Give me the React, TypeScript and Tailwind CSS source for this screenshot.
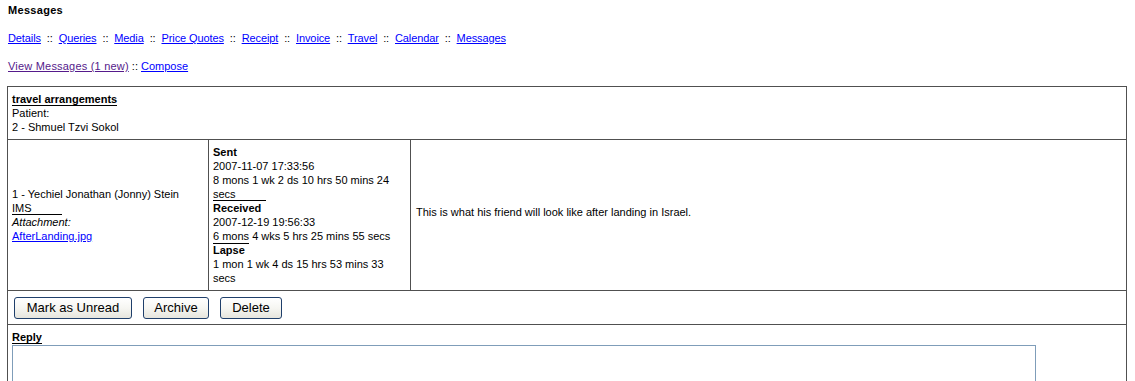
const navLinks = ["Details", "Queries", "Media", "Price Quotes", "Receipt", "Invoice", "Travel", "Calendar", "Messages"];

const buttons = [
  { label: "Mark as Unread", w: "w-[118px]" },
  { label: "Archive", w: "w-[66px]" },
  { label: "Delete", w: "w-[62px]" },
];

export default function App() {
  return (
    <div className="font-['Liberation_Sans',Arial,sans-serif] text-[11px] leading-[14px] text-black bg-white min-h-[381px]">
      <div className="px-2 pt-[3px]">
        <div className="font-bold tracking-[0.3px]">Messages</div>

        <div className="mt-[14px] whitespace-pre tracking-[-0.1px]">
          {navLinks.map((l, i) => (
            <span key={l}>
              <a href="#" className="text-[#0000ff] underline">{l}</a>
              {i < navLinks.length - 1 && "  ::  "}
            </span>
          ))}
        </div>

        <div className="mt-[14px] whitespace-pre">
          <a href="#" className="text-[#551a8b] underline tracking-[0.2px]">View Messages (1 new)</a>
          {" :: "}
          <a href="#" className="text-[#0000ff] underline">Compose</a>
        </div>
      </div>

      <div className="ml-[7px] mt-[13px] w-[1120px] border border-[#505050]">
        {/* subject */}
        <div className="px-1 pt-[5px] pb-[5px] border-b border-[#505050]">
          <span className="inline-block h-[14px] border-b border-black font-bold">travel arrangements</span>
          <div>Patient:</div>
          <div>2 - Shmuel Tzvi Sokol</div>
        </div>

        {/* message row */}
        <div className="flex border-b border-[#505050]">
          <div className="w-[200px] pl-1 pr-1 flex flex-col justify-center">
            <div>1 - Yechiel Jonathan (Jonny) Stein</div>
            <div className="w-[50px] h-[14px] border-b border-black">IMS</div>
            <div className="italic">Attachment:</div>
            <div>
              <a href="#" className="text-[#0000ff] underline">AfterLanding.jpg</a>
            </div>
          </div>
          <div className="w-[202px] border-l border-[#505050] pl-1 pr-1 py-[5px]">
            <div className="font-bold">Sent</div>
            <div>2007-11-07 17:33:56</div>
            <div>8 mons 1 wk 2 ds 10 hrs 50 mins 24</div>
            <div className="w-[53px] h-[14px] border-b border-black">secs</div>
            <div className="font-bold">Received</div>
            <div>2007-12-19 19:56:33</div>
            <div>
              <span className="inline-block h-[15px] border-b border-black">6 mons</span> 4 wks 5 hrs 25 mins 55 secs
            </div>
            <div className="font-bold -mt-px">Lapse</div>
            <div>1 mon 1 wk 4 ds 15 hrs 53 mins 33</div>
            <div>secs</div>
          </div>
          <div className="flex-1 border-l border-[#505050] pl-[5px] pb-[6px] flex items-center">
            This is what his friend will look like after landing in Israel.
          </div>
        </div>

        {/* actions */}
        <div className="flex gap-[11px] pl-[6px] pt-[6px] pb-[5px] border-b border-[#505050]">
          {buttons.map((b) => (
            <button
              key={b.label}
              className={`${b.w} h-[22px] rounded-[3px] border border-[#1f3f6b] bg-gradient-to-b from-white via-[#f6f6f2] to-[#e6e5dd] text-[13px] leading-[20px] text-black text-center`}
            >
              {b.label}
            </button>
          ))}
        </div>

        {/* reply */}
        <div className="px-1 pt-[5px] pb-4">
          <span className="inline-block h-[14px] border-b border-black font-bold">Reply</span>
          <textarea className="block mt-px w-[1024px] h-[80px] border border-[#7f9db9] bg-white resize-none" />
        </div>
      </div>
    </div>
  );
}
